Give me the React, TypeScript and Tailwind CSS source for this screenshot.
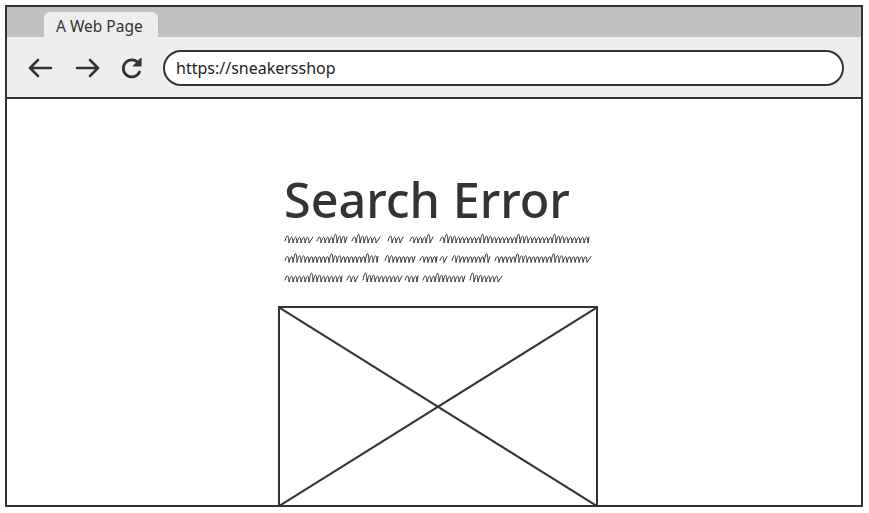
import React from "react";

const lines: number[][][] = [
  [[285, 313], [317, 347], [352, 380], [388, 403], [410, 433], [440, 589]],
  [[285, 378], [385, 415], [420, 437], [440, 447], [452, 490], [495, 591]],
  [[285, 342], [347, 358], [363, 402], [405, 418], [423, 465], [470, 502]],
];

function squiggle(x0: number, x1: number, y: number, seed: number) {
  const base = y + 4;
  let d = `M${x0} ${base - 2}`;
  let x = x0;
  let i = seed;
  while (x < x1 - 4) {
    const r = (i * 37 + 11) % 9;
    const h = r === 0 ? 9 : r < 3 ? 7 : 6;
    const w = 4;
    d += ` C${x + w * 0.5} ${base - h * 1.3} ${x + w * 0.9} ${base - h * 1.3} ${x + w} ${base}`;
    x += w;
    i++;
  }
  d += ` L${x1} ${base - 6}`;
  return d;
}

function Scribbles() {
  return (
    <svg width="320" height="56" viewBox="280 232 320 56" className="block">
      {lines.map((ln, li) =>
        ln.map(([a, b], wi) => (
          <path
            key={`${li}-${wi}`}
            d={squiggle(a, b, 239 + li * 19.5, li * 5 + wi * 3)}
            fill="none"
            stroke="#333"
            strokeWidth="1"
            strokeLinejoin="round"
            strokeLinecap="round"
          />
        ))
      )}
    </svg>
  );
}

export default function App() {
  return (
    <div
      className="w-[869px] h-[513px] bg-white relative overflow-hidden"
      style={{ fontFamily: '"Noto Sans", "Open Sans", sans-serif' }}
    >
      <div className="absolute left-[5px] top-[5px] w-[858px] h-[502px] border-2 border-[#333] flex flex-col">
        {/* tab bar */}
        <div className="h-[30px] bg-[#c0c0c0] flex items-end pl-[37px]">
          <div className="w-[114px] h-[25px] bg-[#eeeeee] rounded-t-[6px] flex items-center pl-[12px] pt-[5px] text-[15.5px] text-[#333] leading-none">
            A Web Page
          </div>
        </div>
        {/* toolbar */}
        <div className="h-[62px] bg-[#eeeeee] border-b-2 border-[#333] flex items-center pl-[20px] pr-[17px] pt-[1px]">
          <svg width="26" height="22" viewBox="0 0 26 22" className="shrink-0">
            <path d="M24 11H3 M11 3L3 11L11 19" fill="none" stroke="#333" strokeWidth="2.6" strokeLinecap="round" strokeLinejoin="round" />
          </svg>
          <svg width="26" height="22" viewBox="0 0 26 22" className="shrink-0 ml-[22px]">
            <path d="M2 11H23 M15 3L23 11L15 19" fill="none" stroke="#333" strokeWidth="2.6" strokeLinecap="round" strokeLinejoin="round" />
          </svg>
          <svg width="24" height="24" viewBox="0 0 24 24" className="shrink-0 ml-[19px]">
            <path d="M18.5 7.2A8.5 8.5 0 1 0 19.5 16" fill="none" stroke="#333" strokeWidth="2.8" strokeLinecap="round" />
            <path d="M21 2.5L21 10L13.5 10Z" fill="#333" stroke="#333" strokeWidth="1.2" strokeLinejoin="round" />
          </svg>
          <div className="ml-[19px] flex-1 h-[36px] bg-white border-2 border-[#333] rounded-full flex items-center pl-[11px] text-[16px] text-[#222] leading-none">
            https://sneakersshop
          </div>
        </div>
        {/* content */}
        <div className="flex-1 flex flex-col pl-[271px] pt-[76px]">
          <div className="text-[48.5px] font-medium leading-none text-[#333] ml-[6px]">Search Error</div>
          <div className="ml-[2px] mt-[8px]">
            <Scribbles />
          </div>
          <div className="mt-[18px] w-[320px] flex-1 border-2 border-b-0 border-[#333] relative">
            <svg className="absolute inset-0 w-full h-full" preserveAspectRatio="none" viewBox="0 0 100 100">
              <line x1="0" y1="0" x2="100" y2="100" stroke="#333" strokeWidth="2" vectorEffect="non-scaling-stroke" />
              <line x1="100" y1="0" x2="0" y2="100" stroke="#333" strokeWidth="2" vectorEffect="non-scaling-stroke" />
            </svg>
          </div>
        </div>
      </div>
    </div>
  );
}
